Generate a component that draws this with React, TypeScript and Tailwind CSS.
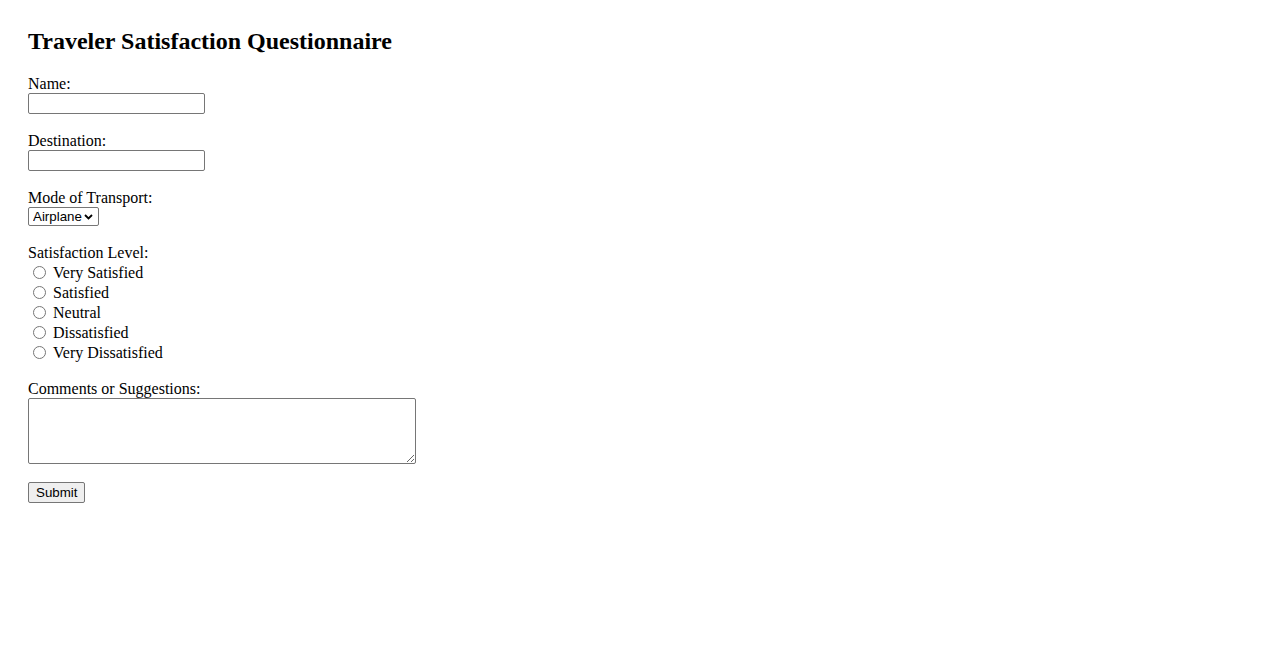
import { useState } from "react";

const LEVELS = [
  "Very Satisfied",
  "Satisfied",
  "Neutral",
  "Dissatisfied",
  "Very Dissatisfied",
];

// champs de texte au style natif du navigateur
const fieldCls =
  "block border border-[#767676] rounded-[2px] bg-white px-[2px] text-[13.33px] text-black font-['Liberation_Sans',Arial,sans-serif]";

export default function App() {
  const [level, setLevel] = useState("");

  return (
    <div className="min-h-screen bg-white px-7 pt-7 text-black font-['Liberation_Serif','Times_New_Roman',serif] text-[16px]">
      <h2 className="text-[24px] leading-[27px] font-bold mb-[20px]">
        Traveler Satisfaction Questionnaire
      </h2>

      <form className="flex flex-col items-start" onSubmit={(e) => e.preventDefault()}>
        <label htmlFor="name" className="block leading-[18px]">Name:</label>
        <input id="name" type="text" className={`${fieldCls} w-[177px] h-[21px]`} />

        <label htmlFor="destination" className="block leading-[18px] mt-[18px]">Destination:</label>
        <input id="destination" type="text" className={`${fieldCls} w-[177px] h-[21px]`} />

        <label htmlFor="transport" className="block leading-[18px] mt-[18px]">Mode of Transport:</label>
        <div className="relative w-[71px] h-[19px]">
          <select
            id="transport"
            className="appearance-none block w-full h-full border border-[#767676] rounded-[2px] bg-white pl-[4px] pr-[16px] py-0 text-[13.33px] leading-[15px] text-black font-['Liberation_Sans',Arial,sans-serif]"
          >
            <option>Airplane</option>
            <option>Train</option>
            <option>Bus</option>
            <option>Car</option>
            <option>Ship</option>
          </select>
          <svg
            className="absolute right-[6px] top-[7px] pointer-events-none"
            width="9"
            height="6"
            viewBox="0 0 9 6"
            fill="none"
          >
            <path d="M1 1 L4.5 4.5 L8 1" stroke="#000" strokeWidth="1.8" />
          </svg>
        </div>

        <div className="block leading-[18px] mt-[18px]">Satisfaction Level:</div>
        <div className="flex flex-col">
          {LEVELS.map((lv) => (
            <label key={lv} className="flex items-end h-5 leading-[18px]">
              <input
                type="radio"
                name="satisfaction"
                value={lv}
                checked={level === lv}
                onChange={() => setLevel(lv)}
                className="w-[13px] h-[13px] ml-[5px] mr-[3px] mb-[3px]"
              />
              <span className="ml-[4px]">{lv}</span>
            </label>
          ))}
        </div>

        <label htmlFor="comments" className="block leading-[18px] mt-[18px]">Comments or Suggestions:</label>
        <textarea
          id="comments"
          className={`${fieldCls} w-[388px] h-[66px] resize`}
        />

        <button
          type="submit"
          className="mt-[18px] h-[21px] px-[7px] border border-[#767676] rounded-[2px] bg-[#efefef] text-[13.33px] leading-[17px] text-black font-['Liberation_Sans',Arial,sans-serif]"
        >
          Submit
        </button>
      </form>
    </div>
  );
}
